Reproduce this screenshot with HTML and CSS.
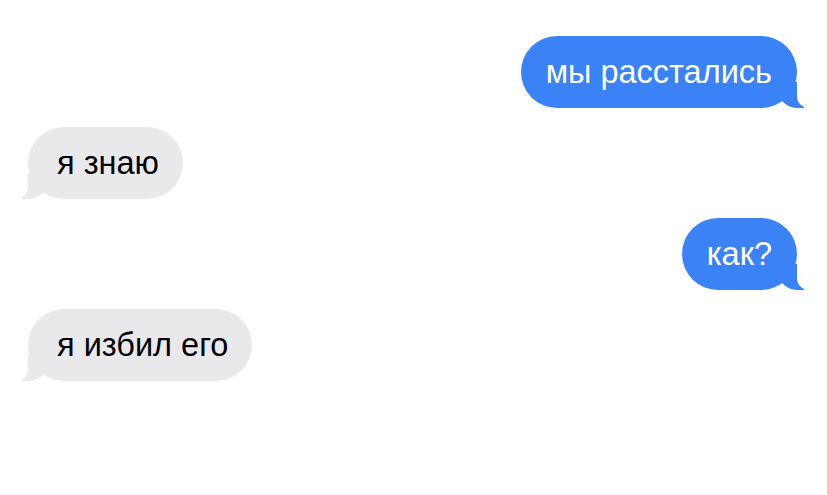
FILE: index.html
```html
<!DOCTYPE html>
<html lang="ru">
<head>
<meta charset="utf-8">
<title>Чат</title>
<link rel="stylesheet" href="styles.css">
</head>
<body>
<div class="chat">
  <div class="msg sent">мы расстались</div>
  <div class="msg recv">я знаю</div>
  <div class="msg sent">как?</div>
  <div class="msg recv">я избил его</div>
</div>
</body>
</html>
```
FILE: styles.css
```css
html, body {
  margin: 0;
  padding: 0;
  background: #ffffff;
}
.chat {
  display: flex;
  flex-direction: column;
  gap: 19px;
  padding: 36px 30px 0 28px;
  font-family: "Liberation Sans", Arial, sans-serif;
}
.msg {
  position: relative;
  height: 72px;
  line-height: 72px;
  border-radius: 36px;
  font-size: 32.5px;
  white-space: nowrap;
}
.sent {
  align-self: flex-end;
  padding: 0 25px;
  background: #3b82f6;
  color: #ffffff;
}
.recv {
  align-self: flex-start;
  padding: 0 24px 0 29px;
  background: #e9e9eb;
  color: #000000;
}
.msg::before,
.msg::after {
  content: "";
  position: absolute;
  bottom: 0;
  height: 26px;
}
.sent::before {
  right: -7px;
  width: 26px;
  background: #3b82f6;
  border-bottom-left-radius: 20px 18px;
}
.sent::after {
  right: -30px;
  width: 30px;
  background: #ffffff;
  border-bottom-left-radius: 12px;
}
.recv::before {
  left: -6px;
  width: 26px;
  background: #e9e9eb;
  border-bottom-right-radius: 20px 18px;
}
.recv::after {
  left: -30px;
  width: 30px;
  background: #ffffff;
  border-bottom-right-radius: 12px;
}
```
